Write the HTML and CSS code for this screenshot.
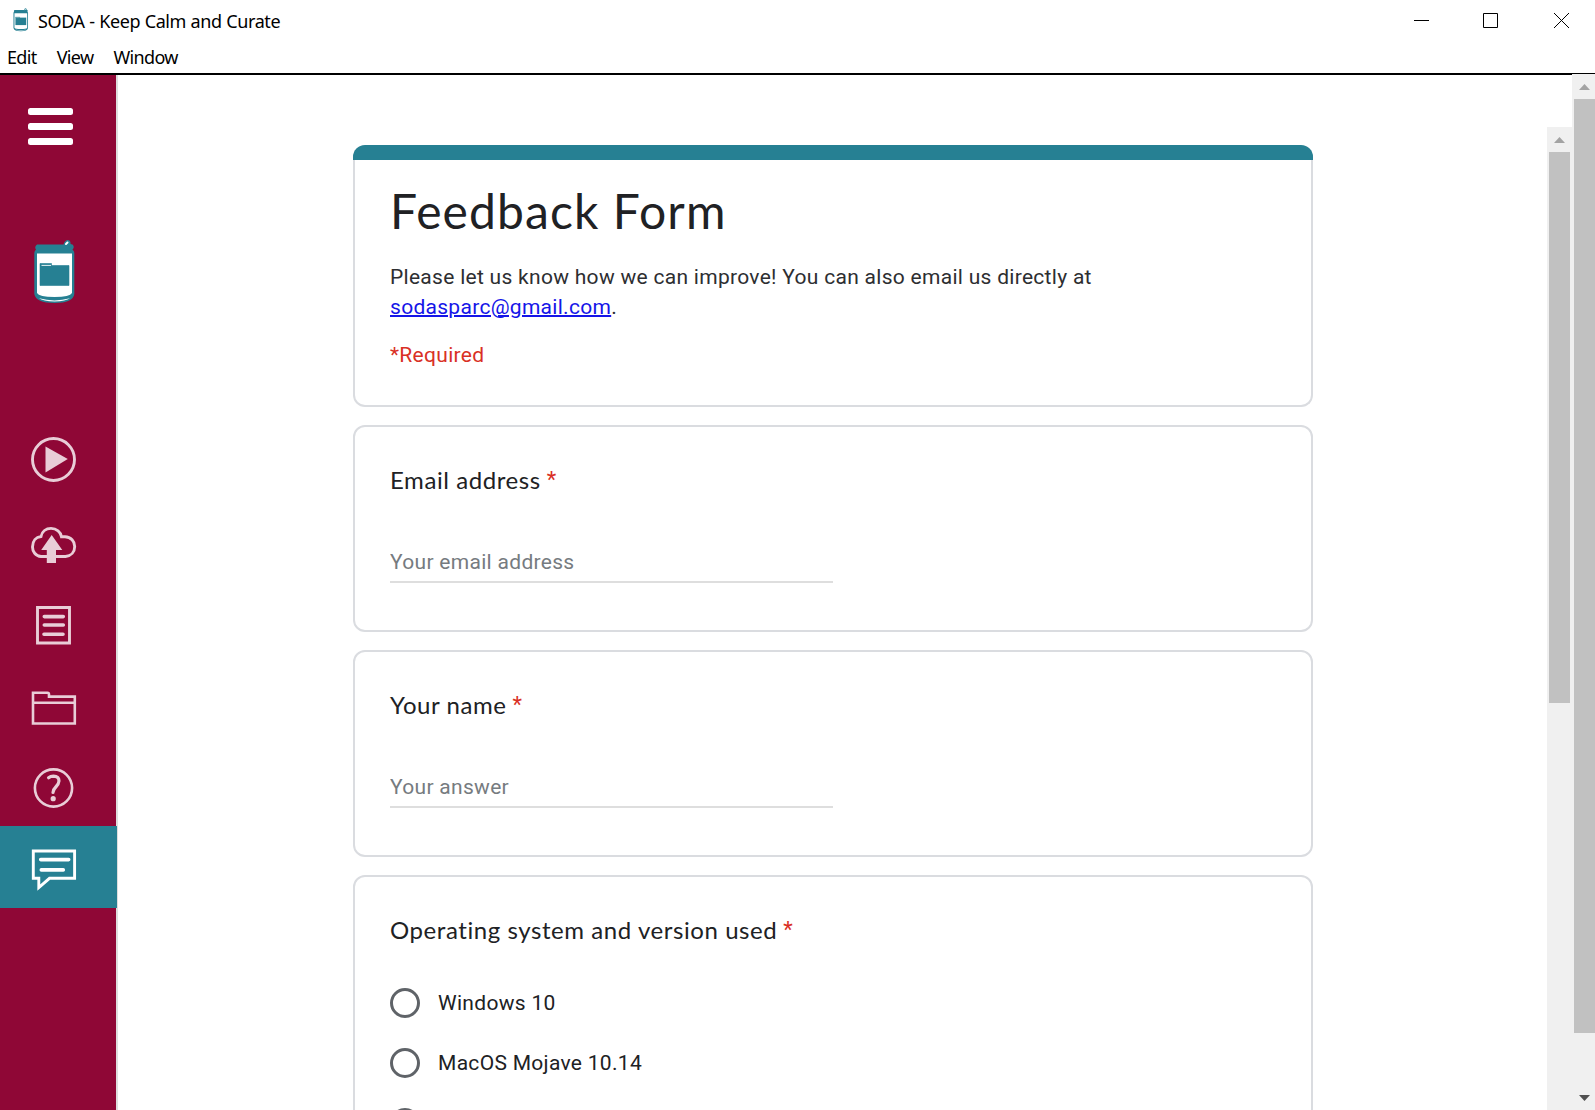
FILE: index.html
```html
<!DOCTYPE html>
<html lang="en">
<head>
<meta charset="utf-8">
<title>SODA - Keep Calm and Curate</title>
<link rel="stylesheet" href="styles.css">
</head>
<body>
<div class="window">
  <header class="titlebar">
    <div class="caption">
      <svg class="app-icon" width="16" height="26" viewBox="33 240 44 64"><use href="#can"/></svg>
      <span class="app-title">SODA - Keep Calm and Curate</span>
    </div>
    <div class="controls">
      <svg width="215" height="42" viewBox="1380 0 215 42" fill="none" stroke="#000" stroke-width="1">
        <path d="M1414 20.500h15M1483.500 13.500h14v14h-14zM1554 13l15 15M1569 13l-15 15"/>
      </svg>
    </div>
  </header>
  <nav class="menubar"><span>Edit</span><span>View</span><span>Window</span></nav>
  <div class="body">
    <aside class="sidebar">
      <button class="hamburger" aria-label="Toggle menu"><i></i><i></i><i></i></button>
      <svg class="logo" width="44" height="64" viewBox="33 240 44 64">
        <g id="can">
          <path d="M37 244.500 Q34 247 36 249.500 Q34.300 251 34.300 253V294Q36 303 54.500 303Q73 303 74.300 294V253Q74.300 251 72.500 249.500Q75 247 72.500 244.500L70.500 244Q71 240.500 67.500 240Q64.500 240.500 63.500 244.500Z" fill="#268093"/>
          <path d="M37 253.500H72V293Q70 297 54.500 297Q39 297 37 293Z" fill="#fff"/>
          <path d="M39 298.300Q54.500 302.500 70 298.300Q66 301.400 54.500 301.400Q43 301.400 39 298.300Z" fill="#fff"/>
          <path d="M66 244l1.500-1.500" stroke="#fff" stroke-width="2" stroke-linecap="round"/>
          <path d="M40 263.500h11.500v2H69v20H40z" fill="#268093" stroke="#268093" stroke-width=".6"/>
          <path d="M41.500 265.400h9.500" stroke="#fff" stroke-width=".9"/>
        </g>
      </svg>
      <div class="nav">
        <a class="nav-item"><svg viewBox="0 416 117 82"><circle cx="53.500" cy="459.500" r="21"/><path class="solid" d="M45.500 446.500v26l22.300-13.600z"/></svg></a>
        <a class="nav-item"><svg viewBox="0 498 117 82"><path d="M47 556.500H41C35.500 556 32.500 551.500 32.500 547C32.500 541 36 537 41 536.500C42 531.500 46 528.400 51 528.400C56.500 528.400 60.800 532 61.500 536.800H65C71 537 74.700 541.500 74.700 546.500C74.700 552 71 556 65.500 556.500H56"/><path class="solid" d="M51.700 535l10.600 15H56v13h-9.200V550h-5.600z"/></svg></a>
        <a class="nav-item"><svg viewBox="0 580 117 82"><path d="M37.500 607.500h32v35.500h-32z"/><path class="bar" d="M44.300 616.600h19M44.300 625h19M44 634.200h19"/></svg></a>
        <a class="nav-item"><svg viewBox="0 662 117 82"><path class="thin" d="M33 692.800h14.500q1.500 0 1.500 1.600v2.200h25.800v26.900H33zM33 702.800h41.800"/></svg></a>
        <a class="nav-item"><svg viewBox="0 744 117 82"><circle class="thin" cx="53.500" cy="788" r="18.600"/><path class="question" d="M48.600 777.800Q50.500 776.200 53.400 776.200Q59 776.400 59 781Q58.800 784 55.800 787Q53 789.700 53 792.500"/><circle class="solid" cx="53.200" cy="798.700" r="2.600"/></svg></a>
        <a class="nav-item active"><svg viewBox="0 826 117 82"><path d="M33.300 851H74.600v27.300H49.500L38.800 887.500V878.300H33.300z"/><path class="bar" d="M40.700 859.600h28M41.300 869.900h22"/></svg></a>
      </div>
    </aside>
    <main class="content">
      <section class="card intro">
        <h1>Feedback Form</h1>
        <p class="description">Please let us know how we can improve! You can also email us directly at<br><a href="mailto:sodasparc@gmail.com">sodasparc@gmail.com</a>.</p>
        <p class="required">*Required</p>
      </section>
      <section class="card question-card">
        <label class="question-title" for="email"><span>Email address</span><b>*</b></label>
        <input id="email" type="text" placeholder="Your email address">
      </section>
      <section class="card question-card">
        <label class="question-title" for="name"><span>Your name</span><b>*</b></label>
        <input id="name" type="text" placeholder="Your answer">
      </section>
      <section class="card options-card">
        <div class="question-title"><span>Operating system and version used</span><b>*</b></div>
        <div class="option"><i class="radio"></i><span>Windows 10</span></div>
        <div class="option"><i class="radio"></i><span>MacOS Mojave 10.14</span></div>
        <div class="option"><i class="radio"></i></div>
      </section>
    </main>
    <div class="scrollbar inner"><svg width="11" height="6"><path d="M5.500 0L11 6H0z" fill="#a3a3a3"/></svg><div class="thumb"></div></div>
    <div class="scrollbar outer"><svg width="11" height="6"><path d="M5.500 0L11 6H0z" fill="#a3a3a3"/></svg><div class="thumb"></div><svg class="down" width="11" height="6"><path d="M0 0H11L5.500 6z" fill="#505050"/></svg></div>
  </div>
</div>
</body>
</html>
```
FILE: styles.css
```css
* { box-sizing: border-box; }
body { margin: 0; background: #fff; overflow: hidden; }
.window { display: flex; flex-direction: column; width: 1595px; height: 1110px; overflow: hidden; }
.titlebar { display: flex; justify-content: space-between; height: 42px; flex: none; }
.caption { display: flex; align-items: flex-start; padding: 7px 0 0 13px; }
.app-title { margin-left: 9px; font: 18px/28px "Noto Sans", sans-serif; letter-spacing: -0.4px; word-spacing: 0.3px; color: #000; white-space: nowrap; }
.controls svg { display: block; }
.menubar { display: flex; height: 31px; flex: none; padding-left: 7px; gap: 20px; font: 18px/30px "Noto Sans", sans-serif; letter-spacing: -0.65px; color: #000; }
.body { display: flex; flex: 1; min-height: 0; border-top: 2px solid #000; }

.sidebar { display: flex; flex-direction: column; flex: none; width: 118px; background: #8f0736; border-right: 2px solid #dedede; }
.hamburger { display: flex; flex-direction: column; gap: 8px; width: 45px; margin: 33px 0 0 28px; padding: 0; border: 0; background: none; }
.hamburger i { display: block; width: 45px; height: 7px; border-radius: 2.5px; background: #fff; }
.logo { display: block; flex: none; margin: 95px 0 0 33px; }
.nav { display: flex; flex-direction: column; margin-top: 112px; }
.nav-item { display: block; height: 82px; width: 117px; color: #e9cdd7; }
.nav-item svg { display: block; width: 117px; height: 82px; fill: none; stroke: currentColor; stroke-width: 2.9; }
.nav-item .solid { fill: currentColor; stroke: none; }
.nav-item .bar { stroke-width: 3.6; stroke-linecap: round; }
.nav-item .thin { stroke-width: 2.6; }
.nav-item .question { stroke-width: 3.2; stroke-linecap: round; }
.nav-item.active { background: #268093; color: #fff; }

.content { flex: 1; min-width: 0; padding: 70px 0 0 235px; font-family: Roboto, sans-serif; font-size: 21px; letter-spacing: 0.3px; color: #202124; overflow: hidden; }
.card { width: 960px; margin-bottom: 18px; padding: 0 35px; border: 2px solid #dadce0; border-radius: 12px; background: #fff; overflow: hidden; }
.intro { position: relative; height: 262px; padding-top: 36px; border-top: 0; overflow: visible; }
.intro::before { content: ""; position: absolute; top: 0; left: -2px; right: -2px; height: 15px; background: #268093; border-radius: 12px 12px 0 0; }
h1 { margin: 0; font: 48px/60px Lato, sans-serif; letter-spacing: 1.1px; }
.description { margin: 21px 0 0; line-height: 30px; letter-spacing: 0.29px; color: #2d2e31; white-space: nowrap; }
.description a { color: #1515e8; text-decoration-thickness: 2px; }
.required { margin: 18px 0 0; line-height: 30px; color: #d93025; }
.question-card { height: 207px; }
.question-title { display: flex; padding: 35px 0 1px; font: 24px/36px Lato, sans-serif; letter-spacing: 0.57px; white-space: nowrap; }
.question-title b { margin-left: 6px; font: 22px/36px Roboto, sans-serif; color: #d93025; }
input { display: block; width: 443px; height: 38px; margin: 46px 0 0; padding: 0 0 2px; border: 0; border-bottom: 2px solid #dedede; background: none; font: inherit; letter-spacing: inherit; outline: 0; }
input::placeholder { color: #767b80; opacity: 1; }
.options-card { height: 400px; }
.option { display: flex; align-items: center; height: 30px; margin-bottom: 30px; gap: 18px; }
.question-title + .option { margin-top: 39px; }
.radio { display: block; width: 30px; height: 30px; border: 3px solid #5f6368; border-radius: 50%; }

.scrollbar { display: flex; flex-direction: column; flex: none; background: #f0f0f0; }
.scrollbar svg { display: block; flex: none; }
.thumb { background: #c1c1c1; width: 21px; }
.inner { width: 25px; margin-top: 52px; padding: 10px 0 0 2px; }
.inner svg { margin-left: 5px; }
.inner .thumb { height: 551px; margin-top: 9px; }
.outer { width: 23px; margin-top: -1px; padding: 10px 0 0 2px; }
.outer svg { margin-left: 5px; }
.outer .thumb { height: 934px; margin-top: 9px; }
.outer .down { margin-top: 62px; }
```
